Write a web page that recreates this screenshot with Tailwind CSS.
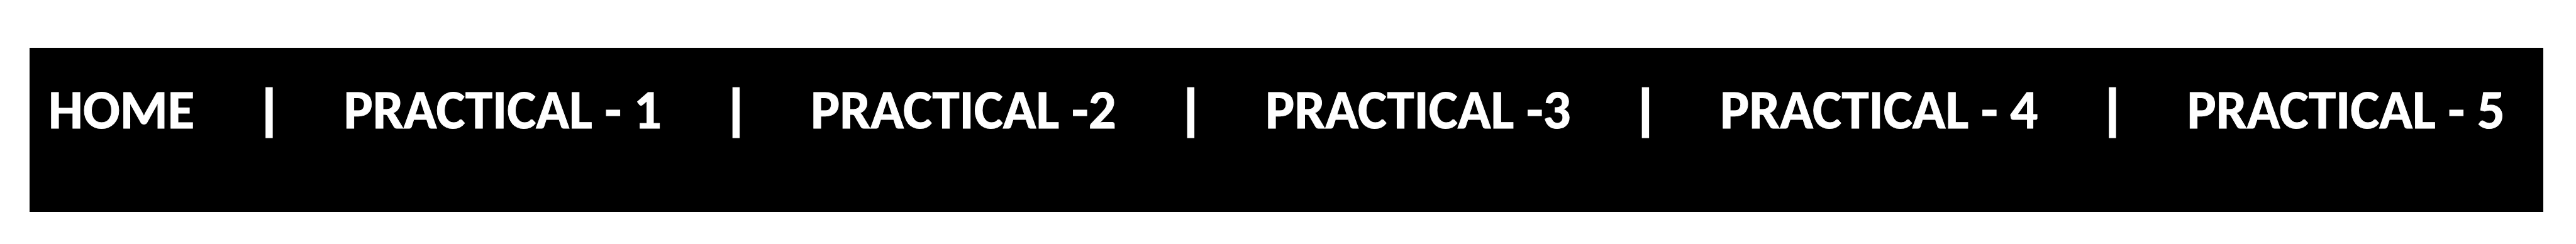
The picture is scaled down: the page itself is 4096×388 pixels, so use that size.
<!DOCTYPE html>
<html lang="en"><head><meta charset="utf-8"><title>Practicals</title>
<script src="https://cdn.jsdelivr.net/npm/@tailwindcss/browser@4"></script></head>
<body class="bg-white pt-[76px] pl-[47px] pr-[52px]">
<nav class="bg-black pl-[30px] pr-[61px] pt-[52px] pb-[117px]">
<ul class="flex items-center justify-between font-[Carlito,Calibri,Lato,sans-serif] font-bold text-[87px] leading-[92px] text-white whitespace-nowrap [-webkit-text-stroke:1px_white]">
<li><a href="#">HOME</a></li><li class="[-webkit-text-stroke:3px_white]">|</li>
<li><a href="#">PRACTICAL - 1</a></li><li class="[-webkit-text-stroke:3px_white]">|</li>
<li><a href="#">PRACTICAL -2</a></li><li class="[-webkit-text-stroke:3px_white]">|</li>
<li><a href="#">PRACTICAL -3</a></li><li class="[-webkit-text-stroke:3px_white]">|</li>
<li><a href="#">PRACTICAL - 4</a></li><li class="[-webkit-text-stroke:3px_white]">|</li>
<li><a href="#">PRACTICAL - 5</a></li>
</ul></nav></body></html>
